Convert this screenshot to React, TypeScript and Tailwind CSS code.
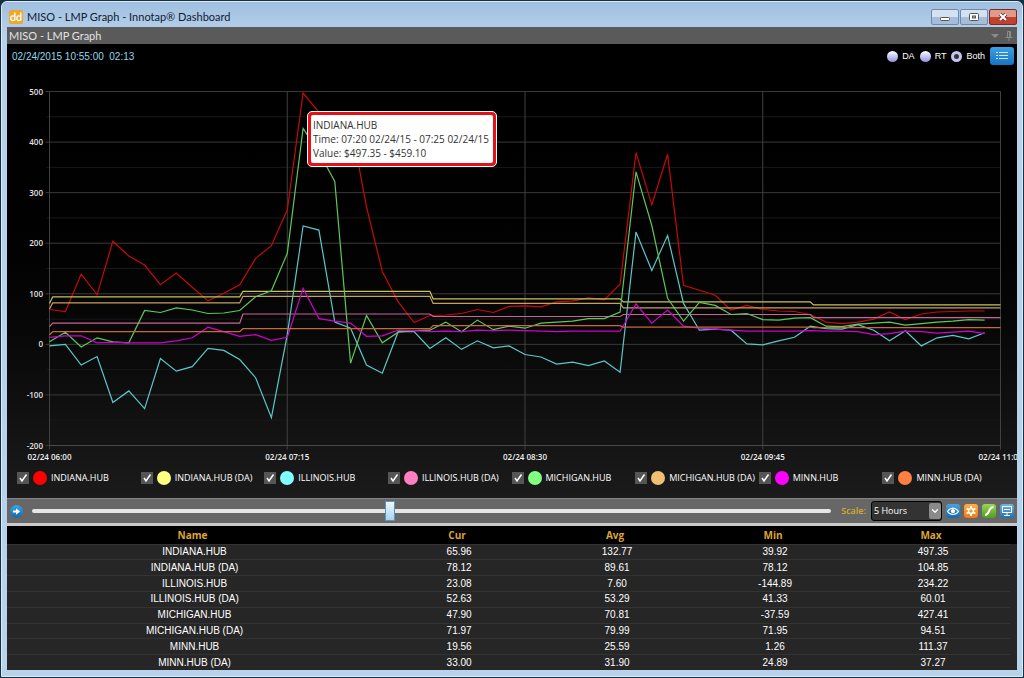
import React, { useState } from 'react'
import { ChevronDown } from 'lucide-react'

type Mode = 'DA' | 'RT' | 'Both'

type Series = {
  name: string
  color: string
  line: string
  // real time series hold one value every five minutes
  values?: number[]
  // day ahead series hold the first value, then one value per hour
  hourly?: number[]
  stats: string[]
}

const SERIES: Series[] = [
  {
    name: 'INDIANA.HUB',
    color: '#ff0000',
    line: '#c80a0a',
    values: [
      69, 65, 139, 98, 204, 175, 157, 118, 141, 113, 86, 101, 118, 170, 195, 266, 497, 459, 450, 440,
      272, 144, 84, 43, 57, 58, 61, 69, 63, 75, 76, 74, 84, 86, 92, 88, 119, 379, 276, 376,
      117, 107, 97, 68, 77, 69, 66, 65, 59, 44, 41, 44, 50, 64, 49, 60, 64, 65, 66, 66,
    ],
    stats: ['65.96', '132.77', '39.92', '497.35'],
  },
  {
    name: 'INDIANA.HUB (DA)',
    color: '#ffff80',
    line: '#c9c45c',
    hourly: [81, 94, 105, 90, 84, 78],
    stats: ['78.12', '89.61', '78.12', '104.85'],
  },
  {
    name: 'ILLINOIS.HUB',
    color: '#80ffff',
    line: '#5cc8c8',
    values: [
      -3, 0, -41, -24, -115, -92, -127, -28, -53, -44, -8, -12, -30, -66, -145, 19, 234, 226, 44, 32,
      -41, -57, 25, 25, -8, 13, -10, 7, -7, -3, -20, -25, -39, -35, -42, -33, -55, 222, 146, 215,
      81, 28, 30, 28, 1, -1, 7, 14, 36, 31, 30, 39, 28, 7, 27, -3, 13, 18, 11, 23,
    ],
    stats: ['23.08', '7.60', '-144.89', '234.22'],
  },
  {
    name: 'ILLINOIS.HUB (DA)',
    color: '#ff80c0',
    line: '#c86496',
    hourly: [35, 42, 60, 55, 59, 53],
    stats: ['52.63', '53.29', '41.33', '60.01'],
  },
  {
    name: 'MICHIGAN.HUB',
    color: '#80ff80',
    line: '#5fc85a',
    values: [
      5, 24, -5, 13, 5, 3, 67, 63, 72, 68, 61, 62, 67, 94, 106, 180, 427, 380, 322, -37,
      57, 3, 24, 27, 28, 44, 25, 48, 29, 36, 32, 42, 44, 46, 51, 51, 64, 341, 235, 91,
      46, 83, 77, 59, 61, 49, 48, 52, 53, 36, 35, 40, 42, 44, 38, 41, 44, 46, 49, 48,
    ],
    stats: ['47.90', '70.81', '-37.59', '427.41'],
  },
  {
    name: 'MICHIGAN.HUB (DA)',
    color: '#f0c070',
    line: '#c8a060',
    hourly: [70, 82, 95, 81, 72, 72],
    stats: ['71.97', '79.99', '71.95', '94.51'],
  },
  {
    name: 'MINN.HUB',
    color: '#ff00ff',
    line: '#d000d0',
    values: [
      14, 17, 17, 3, 4, 3, 3, 3, 7, 13, 34, 25, 16, 19, 8, 14, 111, 51, 46, 42,
      16, 17, 28, 27, 25, 26, 25, 28, 27, 28, 27, 26, 25, 26, 26, 26, 26, 80, 42, 68,
      36, 32, 30, 28, 26, 26, 26, 26, 27, 26, 26, 25, 19, 21, 26, 25, 22, 24, 26, 21,
    ],
    stats: ['19.56', '25.59', '1.26', '111.37'],
  },
  {
    name: 'MINN.HUB (DA)',
    color: '#ff8040',
    line: '#c86a34',
    hourly: [19, 25, 31, 37, 34, 33],
    stats: ['33.00', '31.90', '24.89', '37.27'],
  },
]

const LEFT = 42.5
const TOP = 23.5
const WIDTH = 951
const HEIGHT = 354

const xAt = (step: number) => LEFT + (step / 60) * WIDTH
const yAt = (value: number) => TOP + ((500 - value) / 700) * HEIGHT

function toPoints(s: Series) {
  let points: [number, number][] = []
  if (s.values) {
    points = s.values.map((v, i) => [i, v])
  } else if (s.hourly) {
    s.hourly.forEach((v, i) => {
      if (i === 0) {
        points.push([0, v])
      } else {
        points.push([(i - 1) * 12 + 0.2, v])
        points.push([i === 5 ? 60 : i * 12, v])
      }
    })
  }
  return points.map(([x, v]) => `${xAt(x).toFixed(1)},${yAt(v).toFixed(1)}`).join(' ')
}

function Chart({ series }: { series: Series[] }) {
  const majors = [500, 400, 300, 200, 100, 0, -100, -200]
  const times = ['06:00', '07:15', '08:30', '09:45', '11:00']

  return (
    <svg viewBox="0 0 1010 396" className="block w-full">
      {majors.map((v) => (
        <g key={v}>
          <line x1={LEFT - 4} x2={LEFT + WIDTH} y1={yAt(v)} y2={yAt(v)} stroke="#3a3a3a" />
          {v > -200 && (
            <line x1={LEFT - 3} x2={LEFT + WIDTH} y1={yAt(v - 50)} y2={yAt(v - 50)} stroke="#191919" />
          )}
          <text
            x={36}
            y={yAt(v) + 3}
            textAnchor="end"
            className="fill-[#e4e4e4] font-['Open_Sans',sans-serif] text-[8px] font-semibold"
          >
            {v}
          </text>
        </g>
      ))}
      {times.map((t, i) => (
        <g key={t}>
          <line x1={xAt(i * 15)} x2={xAt(i * 15)} y1={TOP} y2={TOP + HEIGHT + 4} stroke="#404040" />
          <text
            x={xAt(i * 15)}
            y={392}
            textAnchor="middle"
            className="fill-[#f0f0f0] font-['Open_Sans',sans-serif] text-[8px] font-semibold"
          >
            {`02/24 ${t}`}
          </text>
        </g>
      ))}
      <line x1={LEFT} x2={LEFT + WIDTH} y1={TOP + HEIGHT} y2={TOP + HEIGHT} stroke="#4a4a4a" />
      {series.map((s) => (
        <polyline key={s.name} points={toPoints(s)} fill="none" stroke={s.line} strokeWidth={1.2} />
      ))}
    </svg>
  )
}

function WindowButtons() {
  const base = 'flex h-4 w-[28px] items-center justify-center rounded-[2px] border'
  return (
    <div className="flex gap-px">
      <button
        aria-label="Minimize"
        className={`${base} border-[#6f8aa8] bg-linear-to-b from-[#d3e2f2] from-50% to-[#a5bdd8] to-50%`}
      >
        <svg viewBox="0 0 12 10" className="h-[10px] w-3">
          <rect x="1.5" y="5.5" width="9" height="3" rx="1" fill="#fff" stroke="#555" />
        </svg>
      </button>
      <button
        aria-label="Maximize"
        className={`${base} border-[#6f8aa8] bg-linear-to-b from-[#d3e2f2] from-50% to-[#a5bdd8] to-50%`}
      >
        <svg viewBox="0 0 12 10" className="h-[10px] w-3">
          <rect x="1.5" y="1.5" width="9" height="7" rx="1" fill="#fff" stroke="#555" />
          <rect x="4.5" y="4" width="3" height="2" fill="#a5bdd8" stroke="#555" />
        </svg>
      </button>
      <button
        aria-label="Close"
        className={`${base} border-[#7a2a22] bg-linear-to-b from-[#e09a8c] from-50% to-[#c2402c] to-50%`}
      >
        <svg viewBox="0 0 12 10" className="h-[10px] w-3">
          <path d="M3 2l6 6M9 2l-6 6" stroke="#5a2a2a" strokeWidth="3.6" />
          <path d="M3 2l6 6M9 2l-6 6" stroke="#fff" strokeWidth="2.2" />
        </svg>
      </button>
    </div>
  )
}

function ToolButtons() {
  const base = 'flex size-[14px] items-center justify-center rounded-[3px] bg-linear-to-b'
  return (
    <div className="flex gap-1">
      <button aria-label="View" className={`${base} from-[#4ba3dc] to-[#1668ab]`}>
        <svg viewBox="0 0 14 14" className="size-[14px]" fill="none" stroke="#fff">
          <path d="M1.5 7.5c3-4.6 8-4.6 11 0c-3 4-8 4-11 0z" strokeWidth="1.2" />
          <circle cx="7" cy="7.2" r="1.6" fill="#fff" />
        </svg>
      </button>
      <button aria-label="Settings" className={`${base} from-[#ffae45] to-[#ee7a12]`}>
        <svg viewBox="0 0 14 14" className="size-[14px]" fill="none" stroke="#fff">
          <circle cx="7" cy="7" r="2.4" strokeWidth="1.4" />
          <path
            d="M7 2v2.6M7 9.4V12M2.7 4.5l2.2 1.3M9.1 8.2l2.2 1.3M2.7 9.5l2.2-1.3M9.1 5.8l2.2-1.3"
            strokeWidth="2"
          />
        </svg>
      </button>
      <button aria-label="Line style" className={`${base} from-[#9bd653] to-[#4f9c22]`}>
        <svg viewBox="0 0 14 14" className="size-[14px]" fill="none" stroke="#fff">
          <path d="M3 11c5 0 3-8 8.5-8" strokeWidth="2" />
        </svg>
      </button>
      <button aria-label="Display" className={`${base} from-[#6db6e4] to-[#1f6fae]`}>
        <svg viewBox="0 0 14 14" className="size-[14px]" fill="none" stroke="#fff">
          <rect x="2.5" y="2.5" width="9" height="6" />
          <path d="M4 5.5h6M7 8.5v3M4 11.5h6" />
        </svg>
      </button>
    </div>
  )
}

export default function App() {
  const [mode, setMode] = useState<Mode>('Both')
  const [hidden, setHidden] = useState<string[]>([])
  const [position, setPosition] = useState<number>(447)

  const toggle = (name: string) => {
    setHidden(hidden.includes(name) ? hidden.filter((n) => n !== name) : [...hidden, name])
  }

  const visible = SERIES.filter((s) => {
    if (hidden.includes(s.name)) return false
    if (mode === 'DA') return !!s.hourly
    if (mode === 'RT') return !!s.values
    return true
  })

  return (
    <div className="flex min-h-screen flex-col bg-[#173040] p-px font-['Open_Sans',sans-serif]">
      <div className="flex grow flex-col rounded-t-md border border-[#dcebf8] bg-linear-to-b from-[#9fbfe0] to-[#b9d2ec] to-5% px-[5px] pb-[6px]">
        {/* Title bar */}
        <header className="flex h-[25px] items-center justify-between pl-[2px]">
          <div className="flex items-center gap-1 pt-1">
            <svg viewBox="0 0 14 14" className="size-[14px]" fill="none" stroke="#fff">
              <rect width="14" height="14" rx="2" fill="#eda928" stroke="none" />
              <path
                d="M5.8 2.5v8M5.8 6.5c-3-1.5-4 0-4 1.7s1 3.2 4 1.7M11.8 2.5v8M11.8 6.5c-3-1.5-4 0-4 1.7s1 3.2 4 1.7"
                strokeWidth="1.4"
              />
            </svg>
            <h1 className="font-[Lato,sans-serif] text-[11px] leading-4 text-[#10202e]">
              MISO - LMP Graph - Innotap® Dashboard
            </h1>
          </div>
          <div className="pt-1">
            <WindowButtons />
          </div>
        </header>

        <div className="flex h-[17px] items-center justify-between bg-[#5a5a5a] pr-1 pl-[2px]">
          <h2 className="font-[Lato,sans-serif] text-[11px] leading-4 text-[#e2e2e2]">MISO - LMP Graph</h2>
          <div className="flex items-center gap-[6px] text-[#8a8a8a]">
            <svg viewBox="0 0 8 4" className="h-1 w-2">
              <path d="M0 0h8l-4 4z" fill="currentColor" />
            </svg>
            <svg viewBox="0 0 8 10" className="h-[10px] w-2" fill="none" stroke="currentColor">
              <path d="M2.5 6V.5h3V6M4.5 .5V6M.5 6.5h7M4 7v3" />
            </svg>
          </div>
        </div>

        {/* Graph */}
        <section className="relative bg-linear-to-b from-black from-10% to-[#1b1b1b] pb-[6px]">
          <div className="flex h-6 items-center justify-between pr-[3px] pl-[5px]">
            <p className="font-['Liberation_Sans',sans-serif] text-[10px] whitespace-pre text-[#8fd8ea]">
              02/24/2015 10:55:00  02:13
            </p>
            <div className="flex items-center gap-[5px]">
              {(['DA', 'RT', 'Both'] as Mode[]).map((m) => (
                <label key={m} className="flex items-center gap-1 text-[9px] text-white">
                  <input
                    type="radio"
                    name="mode"
                    checked={mode === m}
                    onChange={() => setMode(m)}
                    className="size-[11px] appearance-none rounded-full bg-linear-to-b from-white to-[#8f8fe0] checked:border-[3px] checked:border-[#c4c4f2] checked:bg-[#333] checked:bg-none"
                  />
                  <span className="font-['Liberation_Sans',sans-serif] leading-3">{m}</span>
                </label>
              ))}
              <button
                aria-label="Toggle legend"
                className="flex h-[18px] w-6 items-center justify-center rounded-[3px] bg-linear-to-b from-[#3da0e4] to-[#1673c2]"
              >
                <svg viewBox="0 0 12 8" className="h-2 w-3" stroke="#cfe8fa">
                  <path d="M0 .5h2M3 .5h9M0 3.5h2M3 3.5h9M0 6.5h2M3 6.5h9" />
                </svg>
              </button>
            </div>
          </div>

          <Chart series={visible} />

          {/* Tooltip */}
          <div
            role="tooltip"
            className="absolute top-[67px] left-[300px] rounded-[5px] border border-white bg-[#e31218] p-[3px]"
          >
            <div className="rounded-[2px] bg-white py-[3px] pr-1 pl-[2px] text-[10px] leading-[14px] whitespace-nowrap text-[#333]">
              <p>INDIANA.HUB</p>
              <p>Time: 07:20 02/24/15 - 07:25 02/24/15</p>
              <p>Value: $497.35 - $459.10</p>
            </div>
          </div>

          {/* Legend */}
          <div className="grid h-7 grid-cols-8 items-center pr-[11px] pl-[10px]">
            {SERIES.map((s) => (
              <label key={s.name} className="flex items-center gap-1 text-[9px] whitespace-nowrap text-white">
                <span className="grid size-3 shrink-0 place-items-center">
                  <input
                    type="checkbox"
                    checked={!hidden.includes(s.name)}
                    onChange={() => toggle(s.name)}
                    className="peer col-start-1 row-start-1 size-3 appearance-none bg-[#555]"
                  />
                  <svg
                    viewBox="0 0 12 12"
                    className="pointer-events-none invisible col-start-1 row-start-1 size-3 peer-checked:visible"
                  >
                    <path d="M3 6l2 3l4.5-6.5" fill="none" stroke="#fff" strokeWidth="1.5" />
                  </svg>
                </span>
                <span className="size-[14px] shrink-0 rounded-full" style={{ backgroundColor: s.color }} />
                <span>{s.name}</span>
              </label>
            ))}
          </div>
        </section>

        {/* Time slider */}
        <div className="flex h-[25px] items-center border-t border-[#858585] bg-[#676767] pr-[3px] pl-[3px]">
          <button
            aria-label="Go"
            className="mr-[9px] flex size-[13px] shrink-0 items-center justify-center rounded-full bg-linear-to-b from-[#3fa4e2] to-[#1467ad]"
          >
            <svg viewBox="0 0 10 10" className="size-[9px]">
              <path d="M1 3.8h3.5V1.5L9 5L4.5 8.5V6.2H1z" fill="#fff" />
            </svg>
          </button>
          <input
            type="range"
            aria-label="Time position"
            max={1000}
            value={position}
            onChange={(e) => setPosition(Number(e.target.value))}
            className="h-5 min-w-0 grow appearance-none bg-transparent [&::-webkit-slider-runnable-track]:h-1 [&::-webkit-slider-runnable-track]:rounded-full [&::-webkit-slider-runnable-track]:bg-[#e6e6e6] [&::-webkit-slider-thumb]:-mt-2 [&::-webkit-slider-thumb]:h-5 [&::-webkit-slider-thumb]:w-[10px] [&::-webkit-slider-thumb]:appearance-none [&::-webkit-slider-thumb]:border [&::-webkit-slider-thumb]:border-[#5f93b8] [&::-webkit-slider-thumb]:bg-linear-to-b [&::-webkit-slider-thumb]:from-[#eef8ff] [&::-webkit-slider-thumb]:to-[#a4d4f2]"
          />
          <label htmlFor="scale" className="mr-[5px] ml-[10px] text-[9px] font-semibold text-[#d8ac2c]">
            Scale:
          </label>
          <div className="mr-1 grid items-center">
            <select
              id="scale"
              defaultValue="5"
              className="col-start-1 row-start-1 h-5 w-[71px] appearance-none rounded-[3px] border border-black bg-[#333] px-[2px] text-[9px] text-white"
            >
              <option value="1">1 Hour</option>
              <option value="5">5 Hours</option>
              <option value="12">12 Hours</option>
            </select>
            <span className="pointer-events-none col-start-1 row-start-1 mr-px flex h-4 w-3 items-center justify-center justify-self-end rounded-[2px] bg-[#8a8a8a]">
              <ChevronDown className="size-[10px] text-white" strokeWidth={3} />
            </span>
          </div>
          <ToolButtons />
        </div>

        {/* Summary table */}
        <div className="grow border-t-[3px] border-[#cacaca] bg-linear-to-b from-black from-[18px] to-[#262626] to-[18px] pr-[7px]">
          <table className="h-[144px] w-full table-fixed border-collapse text-center text-[10px] leading-[14px] text-white">
            <thead className="text-[#dfa52c]">
              <tr className="h-[18px]">
                <th className="w-[37%] font-bold">Name</th>
                <th className="font-bold">Cur</th>
                <th className="font-bold">Avg</th>
                <th className="font-bold">Min</th>
                <th className="font-bold">Max</th>
              </tr>
            </thead>
            <tbody className="font-['Liberation_Sans',sans-serif]">
              {SERIES.map((s) => (
                <tr key={s.name} className="border-t border-[#333]">
                  <td className="pl-1">{s.name}</td>
                  {s.stats.map((value, i) => (
                    <td key={i} className="pl-1">
                      {value}
                    </td>
                  ))}
                </tr>
              ))}
            </tbody>
          </table>
        </div>
      </div>
    </div>
  )
}
